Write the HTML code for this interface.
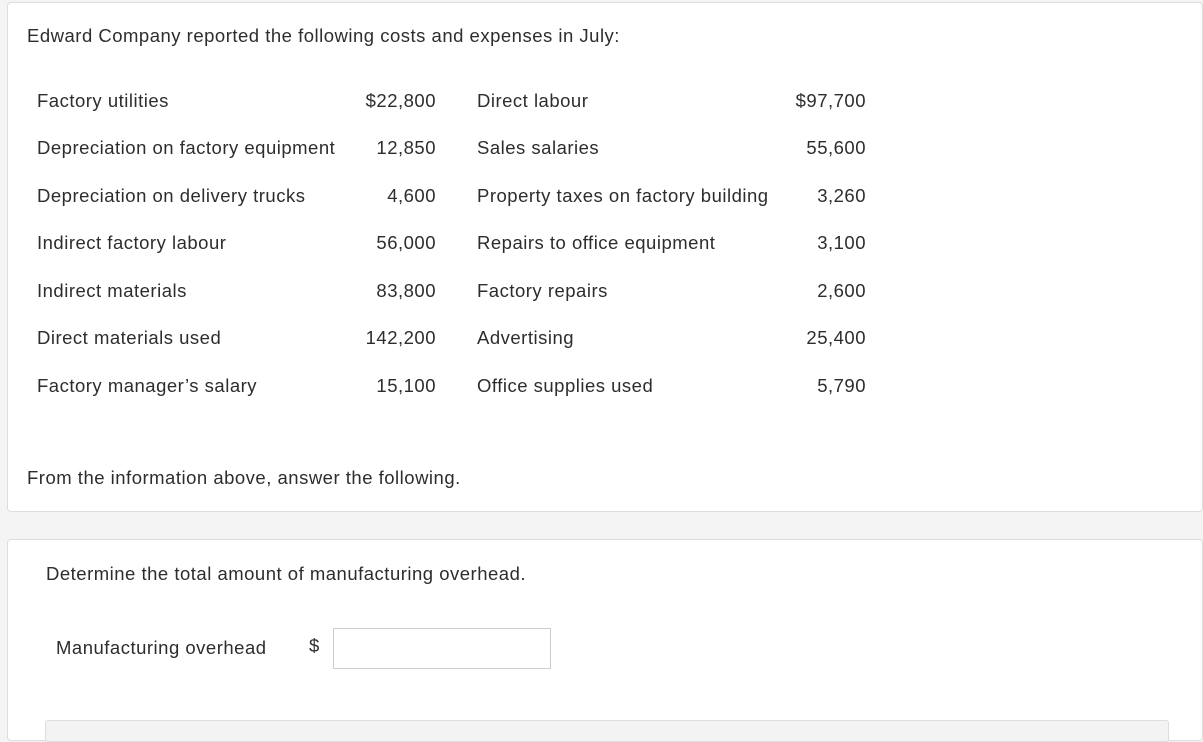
<!DOCTYPE html>
<html><head><style>
body{margin:0;width:1203px;height:731px;background:#f4f4f4;font-family:"Liberation Sans",sans-serif;color:#2d2d2d;font-size:18.5px;letter-spacing:0.5px;position:relative;overflow:hidden}
.card{position:absolute;left:7px;right:0;background:#fff;border:1px solid #ddd;border-radius:4px}
.t{position:absolute;white-space:nowrap;line-height:20px}
.r{text-align:right}
</style></head><body>
<div class="card" style="top:2px;height:508px"></div>
<div class="card" style="top:539px;height:200px"></div>
<div class="t" style="left:27px;top:26px">Edward Company reported the following costs and expenses in July:</div>
<div class="t" style="left:37px;top:91px">Factory utilities</div><div class="t r" style="right:767px;top:91px">$22,800</div>
<div class="t" style="left:477px;top:91px">Direct labour</div><div class="t r" style="right:337px;top:91px">$97,700</div>
<div class="t" style="left:37px;top:138px">Depreciation on factory equipment</div><div class="t r" style="right:767px;top:138px">12,850</div>
<div class="t" style="left:477px;top:138px">Sales salaries</div><div class="t r" style="right:337px;top:138px">55,600</div>
<div class="t" style="left:37px;top:186px">Depreciation on delivery trucks</div><div class="t r" style="right:767px;top:186px">4,600</div>
<div class="t" style="left:477px;top:186px">Property taxes on factory building</div><div class="t r" style="right:337px;top:186px">3,260</div>
<div class="t" style="left:37px;top:233px">Indirect factory labour</div><div class="t r" style="right:767px;top:233px">56,000</div>
<div class="t" style="left:477px;top:233px">Repairs to office equipment</div><div class="t r" style="right:337px;top:233px">3,100</div>
<div class="t" style="left:37px;top:281px">Indirect materials</div><div class="t r" style="right:767px;top:281px">83,800</div>
<div class="t" style="left:477px;top:281px">Factory repairs</div><div class="t r" style="right:337px;top:281px">2,600</div>
<div class="t" style="left:37px;top:328px">Direct materials used</div><div class="t r" style="right:767px;top:328px">142,200</div>
<div class="t" style="left:477px;top:328px">Advertising</div><div class="t r" style="right:337px;top:328px">25,400</div>
<div class="t" style="left:37px;top:376px">Factory manager’s salary</div><div class="t r" style="right:767px;top:376px">15,100</div>
<div class="t" style="left:477px;top:376px">Office supplies used</div><div class="t r" style="right:337px;top:376px">5,790</div>
<div class="t" style="left:27px;top:468px">From the information above, answer the following.</div>
<div class="t" style="left:46px;top:564px">Determine the total amount of manufacturing overhead.</div>
<div class="t" style="left:56px;top:638px">Manufacturing overhead</div>
<div class="t" style="left:309px;top:636px">$</div>
<div style="position:absolute;left:333px;top:628px;width:216px;height:39px;border:1px solid #ccc;background:#fff"></div>
<div style="position:absolute;left:45px;top:720px;width:1122px;height:20px;border:1px solid #ddd;background:#f3f3f3;border-radius:3px"></div>
</body></html>
